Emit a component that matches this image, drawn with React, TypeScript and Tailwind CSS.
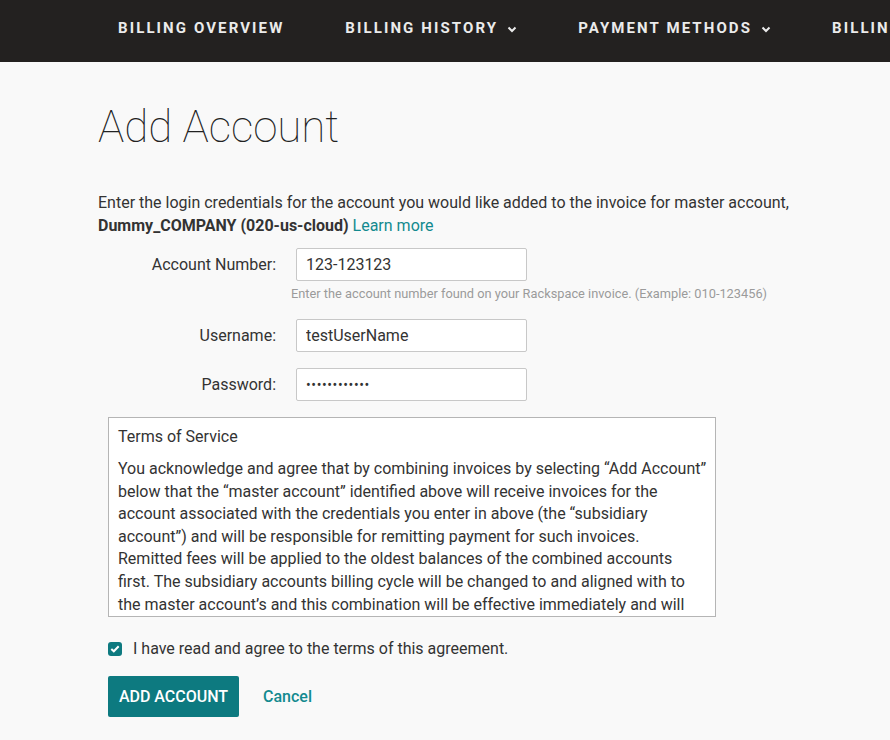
import { useState } from "react";

const Chevron = () => (
  <svg width="10" height="7" viewBox="0 0 10 7" className="ml-[9px] mt-[2px]">
    <path d="M1.5 1.5 L5 5 L8.5 1.5" fill="none" stroke="currentColor" strokeWidth="2" />
  </svg>
);

const navItems = [
  { label: "BILLING OVERVIEW", menu: false },
  { label: "BILLING HISTORY", menu: true },
  { label: "PAYMENT METHODS", menu: true },
  { label: "BILLING PREFERENCES", menu: false },
];

const App = () => {
  const [accountNumber, setAccountNumber] = useState("123-123123");
  const [username, setUsername] = useState("testUserName");
  const [password, setPassword] = useState("password1234");
  const [agreed, setAgreed] = useState(true);

  return (
    <div className="min-h-screen bg-[#f9f9f9] text-[#333] font-['Roboto',sans-serif] overflow-hidden">
      <nav className="h-[62px] bg-[#232120] flex items-center pb-[6px] pl-[118px] gap-[61px] whitespace-nowrap overflow-hidden">
        {navItems.map((item) => (
          <div
            key={item.label}
            className="flex items-center text-[15px] font-bold tracking-[2.1px] text-[#ebebeb] shrink-0"
          >
            {item.label}
            {item.menu && <Chevron />}
          </div>
        ))}
      </nav>

      <main className="pl-[98px] pr-[80px]">
        <h1 className="mt-[37px] text-[44px] font-thin leading-[56px] text-[#222] tracking-[-0.1px]">
          Add Account
        </h1>

        <p className="mt-[36px] text-[16px] leading-[23px]">
          Enter the login credentials for the account you would like added to the invoice for master account,{" "}
          <span className="font-bold">Dummy_COMPANY (020-us-cloud)</span>{" "}
          <a href="#" className="text-[#138a8f]">Learn more</a>
        </p>

        <div className="mt-[11px]">
          <div className="flex items-center">
            <label className="w-[178px] text-right text-[16px]">Account Number:</label>
            <input
              className="ml-[20px] w-[231px] h-[33px] border border-[#c8c8c8] rounded-[2px] bg-white px-[9px] text-[16px] text-[#333] outline-none"
              value={accountNumber}
              onChange={(e) => setAccountNumber(e.target.value)}
            />
          </div>
          <p className="ml-[193px] mt-[4px] text-[12.8px] text-[#9b9b9b] leading-[17px]">
            Enter the account number found on your Rackspace invoice. (Example: 010-123456)
          </p>

          <div className="flex items-center mt-[17px]">
            <label className="w-[178px] text-right text-[16px]">Username:</label>
            <input
              className="ml-[20px] w-[231px] h-[33px] border border-[#c8c8c8] rounded-[2px] bg-white px-[9px] text-[16px] text-[#333] outline-none"
              value={username}
              onChange={(e) => setUsername(e.target.value)}
            />
          </div>

          <div className="flex items-center mt-[16px]">
            <label className="w-[178px] text-right text-[16px]">Password:</label>
            <input
              type="password"
              className="ml-[20px] w-[231px] h-[33px] border border-[#c8c8c8] rounded-[2px] bg-white px-[9px] text-[14px] tracking-[0.6px] text-[#333] outline-none"
              value={password}
              onChange={(e) => setPassword(e.target.value)}
            />
          </div>
        </div>

        <div className="ml-[10px] mt-[16px] w-[608px] h-[200px] border border-[#b5b5b5] bg-white pl-[9px] pr-[8.5px] pt-[9px] overflow-hidden">
          <h3 className="text-[16px] leading-[20px]">Terms of Service</h3>
          <p className="mt-[11px] text-[16px] leading-[22.6px]">
            You acknowledge and agree that by combining invoices by selecting “Add Account” below that the “master account” identified above will receive invoices for the account associated with the credentials you enter in above (the “subsidiary account”) and will be responsible for remitting payment for such invoices. Remitted fees will be applied to the oldest balances of the combined accounts first. The subsidiary accounts billing cycle will be changed to and aligned with to the master account’s and this combination will be effective immediately and will continue until either account is closed or the accounts are separated.
          </p>
        </div>

        <label className="ml-[10px] mt-[20px] flex items-center cursor-pointer">
          <input
            type="checkbox"
            className="sr-only"
            checked={agreed}
            onChange={(e) => setAgreed(e.target.checked)}
          />
          <span
            className={`w-[14px] h-[14px] rounded-[3px] flex items-center justify-center ${
              agreed ? "bg-[#0e7a80]" : "bg-white border border-[#999]"
            }`}
          >
            {agreed && (
              <svg width="10" height="8" viewBox="0 0 10 8">
                <path d="M1.3 4 L3.8 6.3 L8.7 1.3" fill="none" stroke="white" strokeWidth="2" />
              </svg>
            )}
          </span>
          <span className="ml-[11px] text-[16px]">I have read and agree to the terms of this agreement.</span>
        </label>

        <div className="ml-[10px] mt-[15px] flex items-center">
          <button className="h-[41px] w-[131px] bg-[#0d7a80] text-white text-[16px] font-medium rounded-[2px]">
            ADD ACCOUNT
          </button>
          <a href="#" className="ml-[24px] text-[16px] font-medium text-[#138a8f]">Cancel</a>
        </div>
      </main>
    </div>
  );
};

export default App;
